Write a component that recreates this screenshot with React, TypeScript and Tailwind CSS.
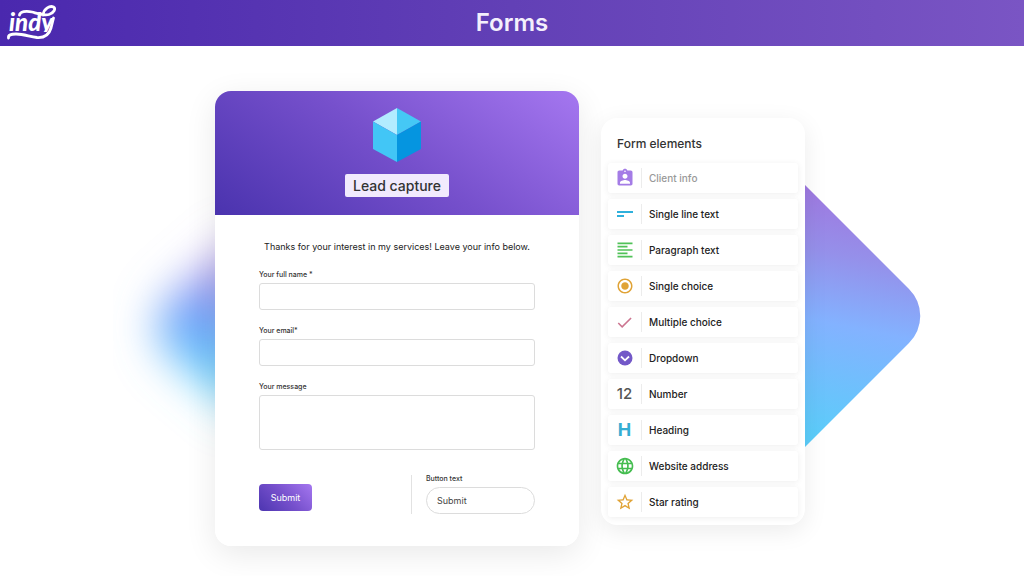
import type { ReactNode } from "react";
import {
  MdAssignmentInd,
  MdCheck,
  MdFormatAlignLeft,
  MdLanguage,
  MdRadioButtonChecked,
  MdStarBorder,
} from "react-icons/md";

function Logo() {
  return (
    <a href="#" aria-label="indy" className="block">
      <svg width="52" height="36" viewBox="0 0 52 36" fill="none" aria-hidden="true">
        <defs>
          <clipPath id="baseline">
            <path d="M0 0h52v27H0z" />
          </clipPath>
        </defs>
        <g clipPath="url(#baseline)">
          <text x="3" y="26" fill="#fff" className="font-['Lato'] text-[24px] font-black italic">
            indy
          </text>
        </g>
        <path
          d="M13.500 10C14 6.500 20 5.500 26 7 33 9 38 11 43 9.500 48 8 50 3.500 47.500 2 44 .5 38 3 37 10"
          stroke="#fff"
          strokeWidth="2.800"
          strokeLinecap="round"
        />
        <path
          d="M47.500 13 45 23C43 30 38 33 31 32.500 23 31.500 18 29 10 29 5 29 2 30 2.500 33"
          stroke="#fff"
          strokeWidth="2.800"
          strokeLinecap="round"
          strokeLinejoin="round"
        />
      </svg>
    </a>
  );
}

function Cube() {
  return (
    <svg width="48" height="54" viewBox="0 0 48 54" aria-hidden="true">
      <path d="M24 0 0 13.5 24 27z" fill="#b3ecff" />
      <path d="M24 0 48 13.5 24 27z" fill="#45c8f5" />
      <path d="M0 13.5 24 27v27L0 41z" fill="#42c6f6" />
      <path d="M48 13.5 24 27v27l24-13z" fill="#0595e0" />
    </svg>
  );
}

function Backdrop() {
  return (
    <>
      <svg
        className="absolute -left-[150px] top-[50px]"
        width="320"
        height="360"
        viewBox="0 0 320 360"
        aria-hidden="true"
      >
        <defs>
          <linearGradient id="glow" x1="165" y1="80" x2="135" y2="270" gradientUnits="userSpaceOnUse">
            <stop offset="0.25" stopColor="#a990e4" />
            <stop offset="0.5" stopColor="#719ffa" />
            <stop offset="0.85" stopColor="#5fd2fa" />
          </linearGradient>
          <filter id="soft" x="-50%" y="-50%" width="200%" height="200%">
            <feGaussianBlur stdDeviation="22" />
          </filter>
        </defs>
        <path d="M180 92 106 156q-28 30 0 60l74 62z" fill="url(#glow)" filter="url(#soft)" />
      </svg>
      <svg
        className="absolute left-full top-[94px]"
        width="116"
        height="262"
        viewBox="0 0 116 262"
        aria-hidden="true"
      >
        <defs>
          <linearGradient id="diamond" x1="50" y1="0" x2="0" y2="250" gradientUnits="userSpaceOnUse">
            <stop offset="0" stopColor="#a074de" />
            <stop offset="0.28" stopColor="#9590ea" />
            <stop offset="0.55" stopColor="#83b2ff" />
            <stop offset="1" stopColor="#5bcdfa" />
          </linearGradient>
        </defs>
        <path d="M0 0 104 104A38 38 0 0 1 104 158L0 262z" fill="url(#diamond)" />
      </svg>
    </>
  );
}

const labelClass = "block text-[7px] leading-3 font-medium text-[#333]";
const fieldClass =
  "block w-full rounded-[3px] border border-[#dcdcdc] bg-white px-2 text-[10px] text-[#333] outline-none";

function LeadForm() {
  return (
    <form
      className="relative w-[364px] overflow-hidden rounded-2xl bg-white"
      onSubmit={(event) => event.preventDefault()}
    >
      <div className="flex flex-col items-center gap-3 bg-[linear-gradient(36deg,#4a33ae_0%,#7650cc_50%,#a577f0_100%)] pt-[17px] pb-[18px]">
        <Cube />
        <h2 className="rounded-[2px] bg-[#f1eafd] px-2 text-[14px] leading-[23px] font-medium text-[#333]">
          Lead capture
        </h2>
      </div>
      <div className="px-11 pt-6 pb-8">
        <p className="text-center text-[9px] leading-[15px] whitespace-nowrap text-[#222]">
          Thanks for your interest in my services! Leave your info below.
        </p>
        <div className="mt-[15px] flex flex-col gap-[15px]">
          <div className="flex flex-col gap-[2px]">
            <label htmlFor="name" className={labelClass}>Your full name *</label>
            <input id="name" type="text" className={`${fieldClass} h-[27px]`} />
          </div>
          <div className="flex flex-col gap-[2px]">
            <label htmlFor="email" className={labelClass}>Your email*</label>
            <input id="email" type="email" className={`${fieldClass} h-[27px]`} />
          </div>
          <div className="flex flex-col gap-[2px]">
            <label htmlFor="message" className={labelClass}>Your message</label>
            <textarea id="message" className={`${fieldClass} h-[55px] resize-none`} />
          </div>
        </div>
        <div className="mt-[25px] flex items-stretch justify-between">
          <button
            type="submit"
            className="mt-[9px] h-[27px] w-[53px] rounded-[4px] bg-[linear-gradient(45deg,#4c35b0_0%,#7650cc_50%,#a577f0_100%)] text-[9px] text-white"
          >
            Submit
          </button>
          <div className="flex w-[124px] flex-col gap-1 border-l border-[#e2e2e2] pl-[14px]">
            <label htmlFor="button-text" className="block text-[7px] leading-2 font-medium text-[#333]">
              Button text
            </label>
            <input
              id="button-text"
              type="text"
              defaultValue="Submit"
              className="h-[27px] w-full rounded-full border border-[#dcdcdc] bg-white px-[10px] text-[9px] text-[#444] outline-none"
            />
          </div>
        </div>
      </div>
    </form>
  );
}

const elements: { label: string; icon: ReactNode; muted?: boolean }[] = [
  { label: "Client info", icon: <MdAssignmentInd size={20} color="#a47ce6" />, muted: true },
  {
    label: "Single line text",
    icon: (
      <svg width="16" height="16" viewBox="0 0 16 16" aria-hidden="true">
        <path d="M0 6h16M0 10h7" stroke="#2fb0dc" strokeWidth="2" />
      </svg>
    ),
  },
  { label: "Paragraph text", icon: <MdFormatAlignLeft size={20} color="#50c258" /> },
  { label: "Single choice", icon: <MdRadioButtonChecked size={18} color="#e0a336" /> },
  { label: "Multiple choice", icon: <MdCheck size={19} color="#cc7590" /> },
  {
    label: "Dropdown",
    icon: (
      <svg width="16" height="16" viewBox="0 0 16 16" fill="none" aria-hidden="true">
        <circle cx="8" cy="8" r="7.5" fill="#7358c8" />
        <path d="m4 6.5 4 3.8 4-3.8" stroke="#fff" strokeWidth="1.8" />
      </svg>
    ),
  },
  {
    label: "Number",
    icon: <span className="text-[15px] leading-4 font-medium text-[#555]">12</span>,
  },
  {
    label: "Heading",
    icon: <span className="text-[18px] leading-4 font-bold text-[#35add2]">H</span>,
  },
  { label: "Website address", icon: <MdLanguage size={20} color="#45bd50" /> },
  { label: "Star rating", icon: <MdStarBorder size={20} color="#e0a336" /> },
];

function ElementsPanel() {
  return (
    <aside className="relative mt-[27px] w-[204px] rounded-2xl bg-white px-[7px] pt-4 pb-2 shadow-[0_6px_24px_rgba(0,0,0,0.08)]">
      <h2 className="px-[9px] text-[12px] leading-5 font-medium text-[#333]">Form elements</h2>
      <ul className="mt-[9px] flex flex-col gap-[6px]">
        {elements.map(({ label, icon, muted }) => (
          <li key={label}>
            <button
              type="button"
              className="flex h-[30px] w-full items-center rounded-[3px] bg-white text-left shadow-[0_1px_6px_rgba(0,0,0,0.07)]"
            >
              <span className="flex h-5 w-[34px] items-center justify-center border-r border-[#ececec]">
                {icon}
              </span>
              <span
                className={
                  muted
                    ? "pl-[7px] text-[10px] leading-4 font-medium text-[#999]"
                    : "pl-[7px] text-[10px] leading-4 font-medium text-[#222]"
                }
              >
                {label}
              </span>
            </button>
          </li>
        ))}
      </ul>
    </aside>
  );
}

export default function App() {
  return (
    <div className="min-h-screen overflow-hidden bg-white font-['Inter',sans-serif]">
      <header className="grid h-[46px] grid-cols-[1fr_auto_1fr] items-center bg-[linear-gradient(90deg,#4a28ae_0%,#6240b6_50%,#7a55c4_100%)] px-[6px]">
        <Logo />
        <h1 className="text-[24px] leading-7 font-semibold text-[#f4effc]">Forms</h1>
      </header>
      <main className="flex justify-center pt-[45px] pr-1 pb-[30px]">
        <div className="relative flex items-start gap-[22px]">
          <Backdrop />
          <div className="relative rounded-2xl shadow-[0_8px_32px_rgba(0,0,0,0.09)]">
            <LeadForm />
          </div>
          <ElementsPanel />
        </div>
      </main>
    </div>
  );
}
